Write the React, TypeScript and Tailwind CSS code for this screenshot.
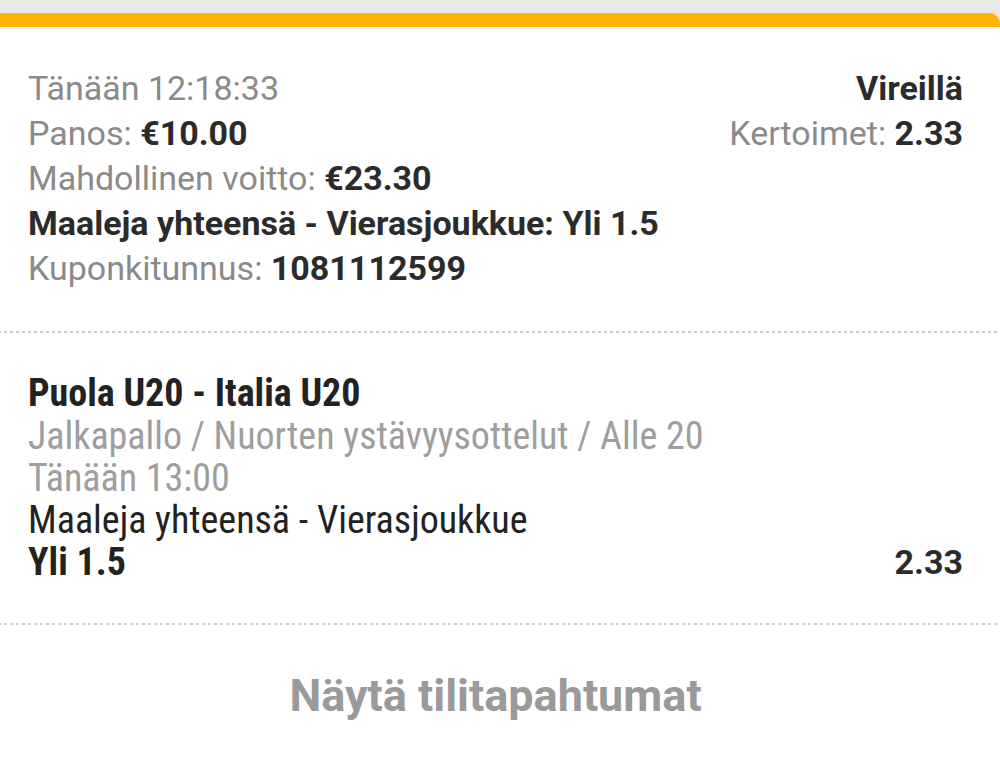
import React from "react";

const dotted =
  "h-[2px] bg-[repeating-linear-gradient(90deg,#d0d0d0_0px,#d0d0d0_3px,transparent_3px,transparent_6px)]";

export default function App() {
  return (
    <div className="w-[1000px] h-[766px] overflow-hidden bg-[#e8e8e8] pt-[13px] font-['Roboto',sans-serif]">
      <div className="ml-[-20px] rounded-t-[10px] overflow-hidden bg-white h-[800px]">
        <div className="h-[14px] bg-[#ffb400]" />

        {/* Coupon summary */}
        <div className="pl-[48px] pr-[37px] pt-[39px] pb-[40px] text-[34px] leading-[45px] text-[#8a8a8a]">
          <div className="flex justify-between">
            <span>Tänään 12:18:33</span>
            <span className="font-bold text-[#2b2b2b]">Vireillä</span>
          </div>
          <div className="flex justify-between">
            <span>
              Panos: <b className="text-[#2b2b2b]">€10.00</b>
            </span>
            <span>
              Kertoimet: <b className="text-[#2b2b2b]">2.33</b>
            </span>
          </div>
          <div>
            Mahdollinen voitto: <b className="text-[#2b2b2b]">€23.30</b>
          </div>
          <div className="font-bold text-[#2b2b2b]">Maaleja yhteensä - Vierasjoukkue: Yli 1.5</div>
          <div>
            Kuponkitunnus: <b className="text-[#2b2b2b]">1081112599</b>
          </div>
        </div>

        <div className={dotted} />

        {/* Selection */}
        <div className="pl-[48px] pr-[37px] pt-[38px] pb-[40px] font-stretch-condensed text-[38px] leading-[42px] text-[#222]">
          <div className="font-bold leading-[44px]">Puola U20 - Italia U20</div>
          <div className="text-[#9e9e9e]">Jalkapallo / Nuorten ystävyysottelut / Alle 20</div>
          <div className="text-[#9e9e9e]">Tänään 13:00</div>
          <div>Maaleja yhteensä - Vierasjoukkue</div>
          <div className="flex justify-between">
            <span className="font-bold">Yli 1.5</span>
            <span className="font-bold font-stretch-normal text-[34px] text-[#2b2b2b]">2.33</span>
          </div>
        </div>

        <div className={dotted} />

        <div className="pl-[20px] pr-[9px] flex justify-center pt-[44px]">
          <span className="text-[45px] leading-[54px] font-bold text-[#9a9a9a]">Näytä tilitapahtumat</span>
        </div>
      </div>
    </div>
  );
}
